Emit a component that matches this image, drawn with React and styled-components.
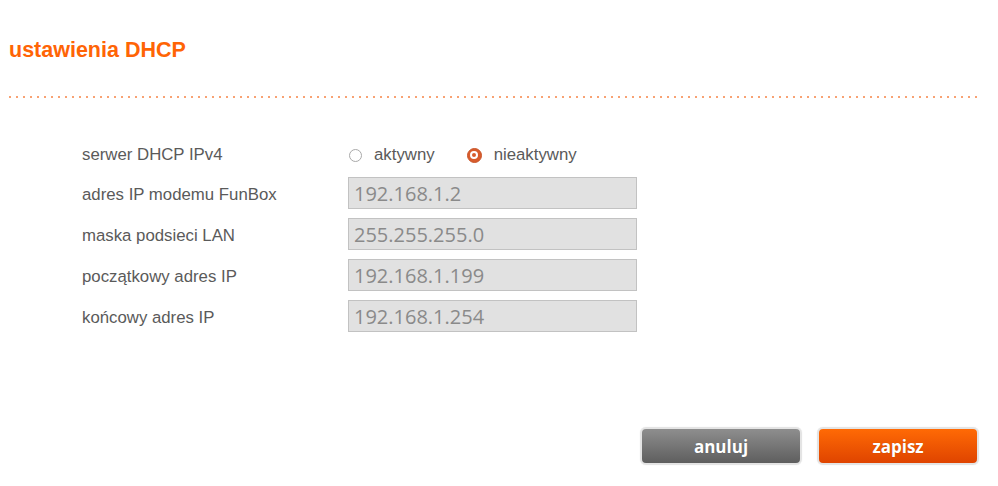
import React from "react";
import styled, { createGlobalStyle } from "styled-components";

const Global = createGlobalStyle`
  html, body { margin: 0; padding: 0; background: #ffffff; }
  body { font-family: "Liberation Sans", Arial, sans-serif; }
`;

const Page = styled.div`
  width: 998px;
  height: 486px;
  box-sizing: border-box;
  padding: 37px 19px 0 9px;
  display: flex;
  flex-direction: column;
`;

const Title = styled.h1`
  margin: 0;
  font-size: 21.5px;
  line-height: 26px;
  font-weight: bold;
  color: #ff6405;
`;

const Divider = styled.div`
  margin-top: 33px;
  height: 2px;
  background: repeating-linear-gradient(
    to right,
    #f8a273 0px,
    #f8a273 2px,
    transparent 2px,
    transparent 7px
  );
`;

const Form = styled.div`
  margin: 44px 0 0 73px;
  display: grid;
  grid-template-columns: 266px 289px;
  grid-template-rows: 26px repeat(4, 32px);
  row-gap: 9px;
  align-items: center;
`;

const Label = styled.div`
  font-size: 16.8px;
  color: #5a5a5a;
  padding-top: ${(p) => (p.$offset ? 3 : 0)}px;
`;

const RadioGroup = styled.div`
  display: flex;
  align-items: center;
`;

const RadioOption = styled.label`
  display: flex;
  align-items: center;
  gap: 12px;
  margin-left: 1px;
  margin-right: 31px;
  font-size: 16.8px;
  color: #5a5a5a;
`;

const RadioCircle = styled.span`
  width: ${(p) => (p.$checked ? 15 : 13)}px;
  height: ${(p) => (p.$checked ? 15 : 13)}px;
  box-sizing: border-box;
  border-radius: 50%;
  display: flex;
  align-items: center;
  justify-content: center;
  border: 1px solid ${(p) => (p.$checked ? "#c9552a" : "#a9a9a9")};
  background: ${(p) => (p.$checked ? "#d85c2c" : "#ffffff")};
  &::after {
    content: "";
    display: ${(p) => (p.$checked ? "block" : "none")};
    width: 4px;
    height: 4px;
    border-radius: 50%;
    background: #d85c2c;
    border: 2px solid #ffffff;
  }
`;

const Field = styled.div`
  height: 32px;
  box-sizing: border-box;
  border: 1px solid #c2c2c2;
  background: #e1e1e1;
  padding-left: 5px;
  display: flex;
  align-items: center;
  font-family: "Open Sans", "DejaVu Sans", sans-serif;
  font-size: 20px;
  color: #8a8a8a;
`;

const Actions = styled.div`
  margin-top: 95px;
  display: flex;
  justify-content: flex-end;
  gap: 15px;
`;

const Button = styled.button`
  width: 162px;
  height: 38px;
  box-sizing: border-box;
  border: 2px solid #e4e4e4;
  border-radius: 6px;
  padding: 0;
  font-family: "Open Sans", "DejaVu Sans", sans-serif;
  font-weight: bold;
  font-size: 17px;
  color: #ffffff;
  text-shadow: 0 0 1px rgba(0, 0, 0, 0.25);
  background: ${(p) =>
    p.$primary
      ? "linear-gradient(to bottom, #ff6a05, #df4400)"
      : "linear-gradient(to bottom, #8e8e8e, #5e5e5e)"};
  box-shadow: 0 0 1px rgba(0, 0, 0, 0.15);
  cursor: pointer;
`;

const fields = [
  ["adres IP modemu FunBox", "192.168.1.2"],
  ["maska podsieci LAN", "255.255.255.0"],
  ["początkowy adres IP", "192.168.1.199"],
  ["końcowy adres IP", "192.168.1.254"],
];

export default function App() {
  return (
    <>
      <Global />
      <Page>
        <Title>ustawienia DHCP</Title>
        <Divider />
        <Form>
          <Label>serwer DHCP IPv4</Label>
          <RadioGroup>
            <RadioOption>
              <RadioCircle />
              aktywny
            </RadioOption>
            <RadioOption>
              <RadioCircle $checked />
              nieaktywny
            </RadioOption>
          </RadioGroup>
          {fields.map(([label, value]) => (
            <React.Fragment key={label}>
              <Label $offset>{label}</Label>
              <Field>{value}</Field>
            </React.Fragment>
          ))}
        </Form>
        <Actions>
          <Button>anuluj</Button>
          <Button $primary>zapisz</Button>
        </Actions>
      </Page>
    </>
  );
}
